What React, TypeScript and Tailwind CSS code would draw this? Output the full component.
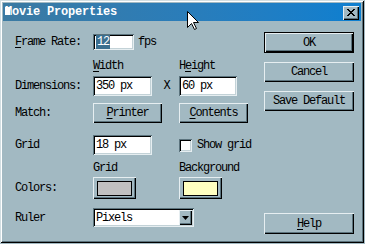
import React from "react";

const raised =
  "shadow-[inset_1px_1px_0_#e6eef1,inset_-1px_-1px_0_#000,inset_-2px_-2px_0_#5b737d]";
const sunken =
  "shadow-[inset_1px_1px_0_#5b737d,inset_-1px_-1px_0_#e6eef1,inset_2px_2px_0_#000,inset_-2px_-2px_0_#c3d2d7]";

function Btn({ w, h, children, def }: { w: string; h: string; children: React.ReactNode; def?: boolean }) {
  if (def) {
    return (
      <div className={`${w} ${h} border border-black bg-[#a2b9c2] flex`}>
        <div className={`flex-1 flex items-center justify-center ${raised}`}>{children}</div>
      </div>
    );
  }
  return <div className={`${w} ${h} bg-[#a2b9c2] flex items-center justify-center ${raised}`}>{children}</div>;
}

function Input({ w, h, children }: { w: string; h: string; children: React.ReactNode }) {
  return (
    <div className={`${w} ${h} bg-white flex items-center pl-[3px] ${sunken}`}>{children}</div>
  );
}

function Swatch({ color }: { color: string }) {
  return (
    <div className={`w-[43px] h-[22px] bg-[#a2b9c2] pt-[4px] pl-[4px] pr-[4px] pb-[3px] flex ${raised}`}>
      <div className={`flex-1 border border-black ${color}`} />
    </div>
  );
}

export default function App() {
  return (
    <div
      className="w-[365px] h-[244px] bg-[#a2b9c2] text-black text-[12px] leading-none tracking-[-1.2px] overflow-hidden relative"
      style={{ fontFamily: '"Liberation Mono", "DejaVu Sans Mono", monospace' }}
    >
      <div className="w-[364px] h-[243px] p-[3px] flex flex-col shadow-[inset_1px_1px_0_#d2dee2,inset_-1px_-1px_0_#000,inset_2px_2px_0_#fff,inset_-2px_-2px_0_#5b737d]">
        {/* Title bar */}
        <div className="h-[18px] bg-gradient-to-r from-[#3b7aa2] to-[#0c7fd0] flex items-center pl-[2px] pr-[2px]">
          <div className="text-white font-bold tracking-[-0.2px] flex items-center">
            <span className="relative">
              M
              <span className="absolute left-0 top-[1px] w-[5px] h-[8px] bg-white" />
            </span>
            <span>ovie Properties</span>
          </div>
          <div className="flex-1" />
          <div className={`w-[16px] h-[14px] mt-[1px] bg-[#a2b9c2] flex items-center justify-center ${raised}`}>
            <svg width="8" height="7" viewBox="0 0 8 7">
              <path d="M0 0h2v1h1v1h2V1h1V0h2v1H7v1H6v1H5v1h1v1h1v1h1v1H6V6H5V5H3v1H2v1H0V6h1V5h1V4h1V3H2V2H1V1H0z" fill="#000" />
            </svg>
          </div>
        </div>

        {/* Body */}
        <div className="flex flex-1">
          {/* Left form */}
          <div className="pl-[12px] w-[261px] flex flex-col">
            {/* Frame rate */}
            <div className="mt-[13px] h-[16px] flex items-center">
              <div className="w-[78px]">
                <u className="underline-offset-2">F</u>rame Rate:
              </div>
              <div className={`w-[41px] h-[16px] bg-white flex items-center pl-[3px] ${sunken}`}>
                <span className="bg-[#3b6f8f] text-white px-[1px] py-[1px]">12</span>
              </div>
              <div className="ml-[4px]">fps</div>
            </div>

            {/* Width / Height labels */}
            <div className="mt-[10px] h-[12px] flex items-center">
              <div className="w-[78px]" />
              <div className="w-[86px]">
                <u className="underline-offset-2">W</u>idth
              </div>
              <div>
                H<u className="underline-offset-2">e</u>ight
              </div>
            </div>

            {/* Dimensions */}
            <div className="mt-[4px] h-[20px] flex items-center">
              <div className="w-[78px]">Dimensions:</div>
              <Input w="w-[59px]" h="h-[20px]">350 px</Input>
              <div className="w-[27px] text-center pl-[2px]">X</div>
              <Input w="w-[58px]" h="h-[20px]">60 px</Input>
            </div>

            {/* Match */}
            <div className="mt-[7px] h-[20px] flex items-center">
              <div className="w-[78px]">Match:</div>
              <Btn w="w-[69px]" h="h-[20px]">
                <span>
                  <u className="underline-offset-2">P</u>rinter
                </span>
              </Btn>
              <div className="w-[17px]" />
              <Btn w="w-[69px]" h="h-[20px]">
                <span>
                  <u className="underline-offset-2">C</u>ontents
                </span>
              </Btn>
            </div>

            {/* Grid */}
            <div className="mt-[12px] h-[20px] flex items-center">
              <div className="w-[78px]">Grid</div>
              <Input w="w-[59px]" h="h-[20px]">18 px</Input>
              <div className="w-[27px]" />
              <div className={`w-[13px] h-[13px] bg-white ${sunken}`} />
              <div className="ml-[5px]">Show grid</div>
            </div>

            {/* Colors labels */}
            <div className="mt-[7px] h-[12px] flex items-center">
              <div className="w-[78px]" />
              <div className="w-[86px]">Grid</div>
              <div>Background</div>
            </div>

            {/* Colors */}
            <div className="mt-[3px] h-[22px] flex items-center">
              <div className="w-[78px]">Colors:</div>
              <Swatch color="bg-[#c0c0c0]" />
              <div className="w-[43px]" />
              <Swatch color="bg-[#ffffc0]" />
            </div>

            {/* Ruler */}
            <div className="mt-[9px] h-[19px] flex items-center">
              <div className="w-[78px]">Ruler</div>
              <div className={`w-[101px] h-[19px] bg-white flex items-center pl-[3px] pr-[2px] ${sunken}`}>
                <div className="flex-1">Pixels</div>
                <div className={`w-[13px] h-[15px] bg-[#a2b9c2] flex items-center justify-center ${raised}`}>
                  <svg width="7" height="4" viewBox="0 0 7 4">
                    <path d="M0 0h7L3.5 4z" fill="#000" />
                  </svg>
                </div>
              </div>
            </div>
          </div>

          {/* Right buttons */}
          <div className="flex flex-col w-[90px]">
            <div className="mt-[11px]">
              <Btn w="w-[90px]" h="h-[21px]" def>
                OK
              </Btn>
            </div>
            <div className="mt-[9px]">
              <Btn w="w-[90px]" h="h-[20px]">Cancel</Btn>
            </div>
            <div className="mt-[9px]">
              <Btn w="w-[90px]" h="h-[20px]">Save Default</Btn>
            </div>
            <div className="mt-[102px]">
              <Btn w="w-[90px]" h="h-[21px]">
                <span>
                  <u className="underline-offset-2">H</u>elp
                </span>
              </Btn>
            </div>
          </div>
        </div>
      </div>

      {/* Mouse cursor */}
      <svg className="absolute left-[187px] top-[11px]" width="12" height="20" viewBox="0 0 12 20">
        <path d="M0.5 0.5V16.5L4.5 12.5L7.5 18.5L9.5 17.5L6.5 11.5H11.5Z" fill="#fff" stroke="#000" strokeWidth="1" />
      </svg>
    </div>
  );
}
